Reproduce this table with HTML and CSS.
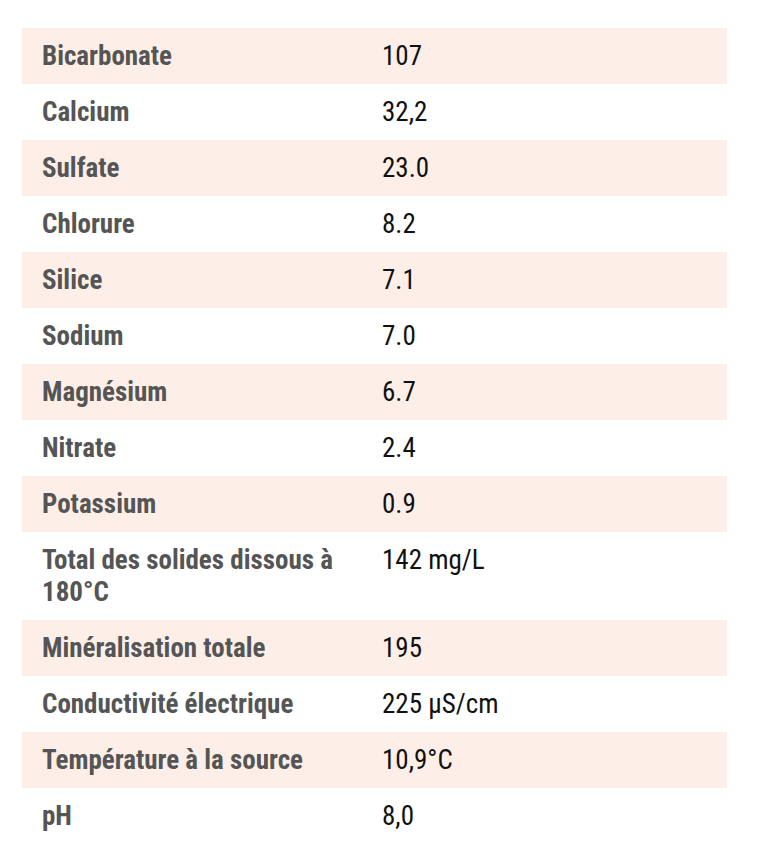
FILE: index.html
```html
<!DOCTYPE html>
<html lang="fr">
<head>
<meta charset="utf-8">
<link rel="stylesheet" href="styles.css">
</head>
<body>
<table class="minerals">
  <tbody>
    <tr><th>Bicarbonate</th><td>107</td></tr>
    <tr><th>Calcium</th><td>32,2</td></tr>
    <tr><th>Sulfate</th><td>23.0</td></tr>
    <tr><th>Chlorure</th><td>8.2</td></tr>
    <tr><th>Silice</th><td>7.1</td></tr>
    <tr><th>Sodium</th><td>7.0</td></tr>
    <tr><th>Magnésium</th><td>6.7</td></tr>
    <tr><th>Nitrate</th><td>2.4</td></tr>
    <tr><th>Potassium</th><td>0.9</td></tr>
    <tr><th>Total des solides dissous à 180°C</th><td>142 mg/L</td></tr>
    <tr><th>Minéralisation totale</th><td>195</td></tr>
    <tr><th>Conductivité électrique</th><td>225 µS/cm</td></tr>
    <tr><th>Température à la source</th><td>10,9°C</td></tr>
    <tr><th>pH</th><td>8,0</td></tr>
  </tbody>
</table>
</body>
</html>
```
FILE: styles.css
```css
html, body {
  margin: 0;
  padding: 0;
  background: #ffffff;
}
body {
  padding: 28px 47px 0 22px;
  font-family: "Roboto Condensed", Roboto, "Liberation Sans", sans-serif;
  font-stretch: condensed;
}
.minerals {
  width: 705px;
  border-collapse: collapse;
  border-spacing: 0;
  table-layout: fixed;
}
.minerals tr:nth-child(odd) {
  background: #fdefe8;
}
.minerals th,
.minerals td {
  padding: 12px 20px;
  font-size: 27px;
  line-height: 32px;
  vertical-align: top;
  text-align: left;
}
.minerals th {
  width: 300px;
  font-weight: 700;
  color: #555555;
}
.minerals td {
  font-weight: 400;
  color: #111111;
}
```
